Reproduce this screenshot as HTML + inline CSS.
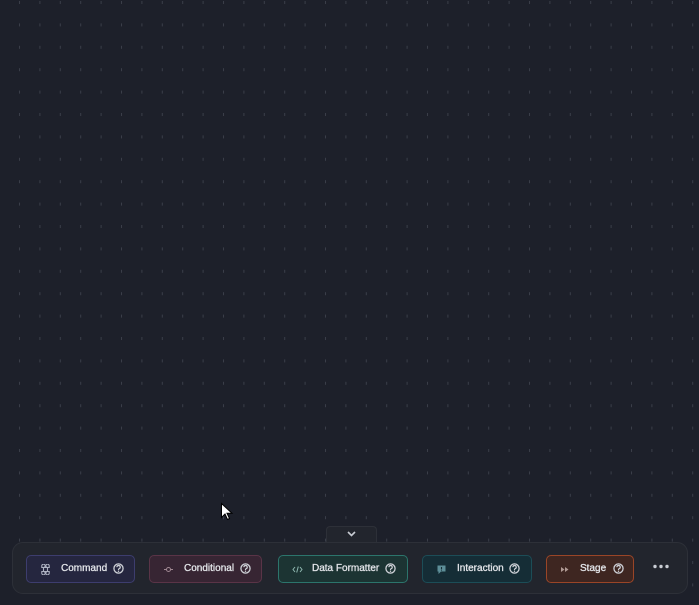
<!DOCTYPE html>
<html><head><style>
body{margin:0;width:699px;height:605px;overflow:hidden;background:#1d202a;font-family:"Liberation Sans",sans-serif;position:relative}
.bar{position:absolute;left:12px;top:542px;width:674px;height:50px;background:#22252d;border:1px solid #2d3038;border-radius:11px}
.tab{position:absolute;left:326px;top:526px;width:49px;height:16px;background:#22252d;border:1px solid #2d3038;border-bottom:none;border-radius:4px 4px 0 0}
.b{position:absolute;top:555px;height:26px;border:1px solid;border-radius:5px;color:#e4e6ea;font-size:10px;font-weight:normal;-webkit-text-stroke:0.3px #e4e6ea}
.b .ic{position:absolute;left:13px;top:8px;width:11px;height:11px}
.b .t{position:absolute;top:7px;white-space:nowrap}
.q{position:absolute;top:7px;width:11px;height:11px}
</style></head><body>
<svg width="699" height="605" style="position:absolute;left:0;top:0">
<defs><pattern id="p" x="19" y="1" width="20.4" height="22.4" patternUnits="userSpaceOnUse"><rect width="1" height="3" fill="#3a3e49"/></pattern>
<symbol id="q" viewBox="0 0 12 12"><circle cx="6" cy="6" r="5" stroke="#cfd2d8" stroke-width="1.4" fill="none"/><path d="M4.3 4.6a1.8 1.8 0 1 1 2.4 1.6c-.5.2-.7.5-.7 1v.4" stroke="#cfd2d8" stroke-width="1.3" fill="none"/><circle cx="6" cy="9" r=".8" fill="#cfd2d8"/></symbol></defs>
<rect width="699" height="605" fill="url(#p)"/>
</svg>
<div class="tab"><svg width="49" height="16" style="position:absolute;left:0;top:0"><path d="M21 5 L24.5 8.5 L28 5" stroke="#c8ccd3" stroke-width="1.6" fill="none"/></svg></div>
<div class="bar"></div>
<div class="b" style="left:26px;width:107px;background:#25263f;border-color:#3d3d6e">
<svg class="ic" viewBox="0 0 11 11"><path d="M3.5 3.5h4v4h-4z M3.5 3.5a1.7 1.7 0 1 0 -1.7 -1.7v1.7z M7.5 3.5a1.7 1.7 0 1 1 1.7 -1.7v1.7z M3.5 7.5a1.7 1.7 0 1 1 -1.7 1.7v-1.7z M7.5 7.5a1.7 1.7 0 1 0 1.7 1.7v-1.7z" stroke="#aeb2c2" stroke-width="1.1" fill="none"/></svg>
<span class="t" style="left:34px">Command</span><svg class="q" style="left:86px"><use href="#q"/></svg></div>
<div class="b" style="left:149px;width:111px;background:#372533;border-color:#5a3447">
<svg class="ic" viewBox="0 0 11 11"><circle cx="5.5" cy="5.5" r="2" stroke="#a08892" fill="none"/><path d="M1 5.5h2.5M7.5 5.5h2.5" stroke="#a08892"/></svg>
<span class="t" style="left:34px">Conditional</span><svg class="q" style="left:90px"><use href="#q"/></svg></div>
<div class="b" style="left:278px;width:128px;background:#1c3433;border-color:#2c756c">
<svg class="ic" viewBox="0 0 11 11"><path d="M3 3L1 5.5 3 8M8 3l2 2.5L8 8M6.3 2.5L4.7 8.5" stroke="#8fb8b0" fill="none"/></svg>
<span class="t" style="left:33px">Data Formatter</span><svg class="q" style="left:106px"><use href="#q"/></svg></div>
<div class="b" style="left:422px;width:108px;background:#152d36;border-color:#1c4d57">
<svg class="ic" viewBox="0 0 11 11"><path d="M1.5 1.5h8v6H5l-2.5 2.5V7.5h-1z" fill="#5d8e98"/><path d="M5.5 3v2.3" stroke="#152d36" stroke-width="1.1"/><circle cx="5.5" cy="6.3" r=".5" fill="#152d36"/></svg>
<span class="t" style="left:34px">Interaction</span><svg class="q" style="left:86px"><use href="#q"/></svg></div>
<div class="b" style="left:546px;width:86px;background:#3e2621;border-color:#9a4527">
<svg class="ic" viewBox="0 0 11 11"><path d="M1 3l3.5 2.5L1 8zM5 3l3.5 2.5L5 8z" fill="#b09a94"/></svg>
<span class="t" style="left:33px">Stage</span><svg class="q" style="left:66px"><use href="#q"/></svg></div>
<svg width="20" height="8" style="position:absolute;left:651px;top:563px"><circle cx="4" cy="3.5" r="1.7" fill="#c8ccd3"/><circle cx="10" cy="3.5" r="1.7" fill="#c8ccd3"/><circle cx="16" cy="3.5" r="1.7" fill="#c8ccd3"/></svg>
<svg width="14" height="20" style="position:absolute;left:220px;top:502px"><path d="M1.5 1.5v14l3.5-3.5 2.5 5.5 2-1-2.5-5.2h5z" fill="#fff" stroke="#000" stroke-width="1"/></svg>
</body></html>
